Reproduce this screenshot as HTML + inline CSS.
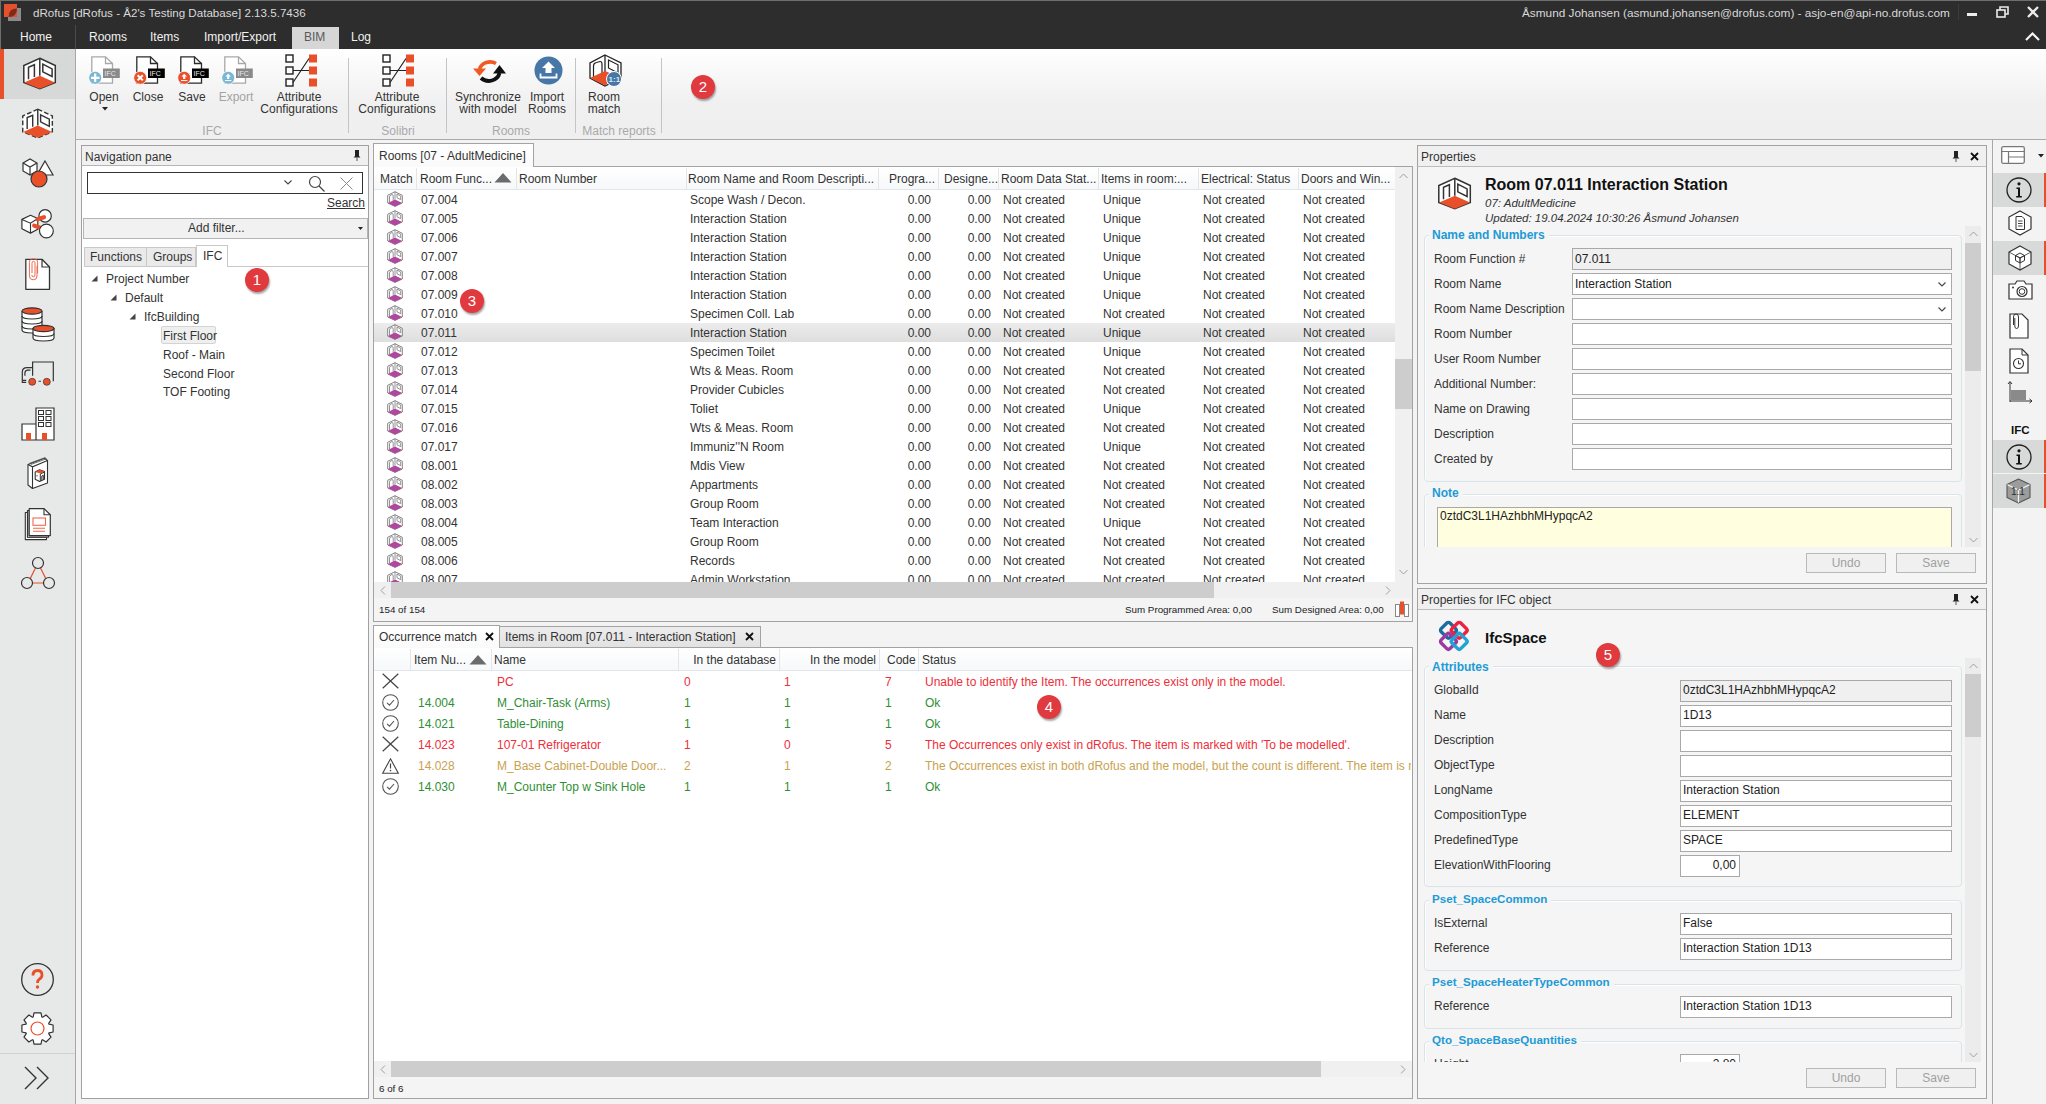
<!DOCTYPE html><html><head><meta charset="utf-8"><title>dRofus</title><style>
*{margin:0;padding:0;box-sizing:border-box}
html,body{width:2046px;height:1104px;overflow:hidden;background:#f3f3f3;font-family:"Liberation Sans",sans-serif;font-size:12px;color:#333}
.a{position:absolute}
.t{position:absolute;white-space:nowrap;line-height:14px}
svg{position:absolute;overflow:visible}
.badge{position:absolute;width:24px;height:24px;border-radius:50%;background:#e0393e;color:#fff;font-size:15px;line-height:24px;text-align:center;box-shadow:1px 2px 2px rgba(0,0,0,.35)}
.inp{position:absolute;background:#fff;border:1px solid #a9a9a9;height:22px}
.lbl{position:absolute;white-space:nowrap;line-height:14px;color:#333}
.grp{position:absolute;border:1px solid #d9e3ea;border-radius:4px;box-shadow:inset 1px 1px 0 #fff}
.gh{position:absolute;white-space:nowrap;line-height:14px;color:#1e9ad6;font-weight:bold;background:#f5f5f5;padding:0 4px 0 3px}
.btn{position:absolute;border:1px solid #b9b9b9;background:#f0f0f0;color:#a0a0a0;text-align:center;line-height:18px;font-size:12px}
</style></head><body>
<div class="a" style="left:0;top:0;width:2046px;height:49px;background:#2d2d2d"></div>
<svg style="left:0;top:0" width="24" height="24"><rect x="8" y="8" width="13" height="13" fill="#8c8a8a"/><rect x="4" y="4" width="13" height="13" fill="#e5502d"/><path d="M8.6 17 Q8.6 8.6 17 8.6 Q17 17 8.6 17 Z" fill="#7f2b19"/></svg>
<div class="a" style="left:0;top:0;width:2046px;height:1px;background:#6e6e6e"></div>
<div class="a" style="left:0;top:0;width:1px;height:49px;background:#6e6e6e"></div>
<div class="t" style="left:33px;top:6px;color:#d9d9d9;font-size:11.6px">dRofus [dRofus - Å2&#x27;s Testing Database] 2.13.5.7436</div>
<div class="t" style="left:1522px;top:6px;color:#d9d9d9;font-size:11.8px">Åsmund Johansen (asmund.johansen@drofus.com) - asjo-en@api-no.drofus.com</div>
<div class="a" style="left:1958px;top:4px;width:1px;height:16px;background:#3c3c3c"></div>
<div class="a" style="left:1967px;top:13px;width:10px;height:3px;background:#ececec"></div>
<svg style="left:1996px;top:6px" width="14" height="12"><rect x="1" y="4" width="8" height="7" fill="none" stroke="#ececec" stroke-width="1.6"/><path d="M4 4V1h8v7h-3" fill="none" stroke="#ececec" stroke-width="1.6"/></svg>
<svg style="left:2027px;top:6px" width="12" height="12"><path d="M1 1L11 11M11 1L1 11" stroke="#ececec" stroke-width="2.3"/></svg>
<svg style="left:2025px;top:32px" width="15" height="9"><path d="M1 8L7.5 1.5L14 8" fill="none" stroke="#f5f5f5" stroke-width="2.2"/></svg>
<div class="a" style="left:75px;top:25px;width:1px;height:24px;background:#4a4a4a"></div>
<div class="a" style="left:292px;top:27px;width:47px;height:22px;background:#d6d6d6"></div>
<div class="t" style="left:20px;top:30px;color:#f2f2f2;font-size:12px">Home</div>
<div class="t" style="left:89px;top:30px;color:#f2f2f2;font-size:12px">Rooms</div>
<div class="t" style="left:150px;top:30px;color:#f2f2f2;font-size:12px">Items</div>
<div class="t" style="left:204px;top:30px;color:#f2f2f2;font-size:12px">Import/Export</div>
<div class="t" style="left:304px;top:30px;color:#5a5a5a;font-size:12px">BIM</div>
<div class="t" style="left:351px;top:30px;color:#f2f2f2;font-size:12px">Log</div>
<div class="a" style="left:76px;top:49px;width:1970px;height:90px;background:linear-gradient(#ffffff 0%,#f0f0f0 60%,#efefef 100%)"></div>
<div class="a" style="left:76px;top:139px;width:1970px;height:1px;background:#aaaaaa"></div>
<svg style="left:91px;top:56px" width="32" height="30" viewBox="0 0 32 30"><path d="M0.8 0.8H14.5L21.5 7.5V27.2H0.8Z" fill="#fff" stroke="#a8a8a8" stroke-width="1.3"/><path d="M14.5 0.8V7.5H21.5" fill="none" stroke="#a8a8a8" stroke-width="1.3"/><rect x="12" y="12.5" width="16.8" height="9.5" fill="#8a8a8a"/><text x="13.6" y="20" font-family="Liberation Sans" font-size="7" fill="#e8e8e8">IFC</text><circle cx="4.2" cy="21.8" r="6.5" fill="#7bb6d2" stroke="#fff" stroke-width="0.8"/><path d="M4.2 17.5V26M0 21.8H8.5" stroke="#fff" stroke-width="2.2"/></svg>
<svg style="left:136px;top:56px" width="32" height="30" viewBox="0 0 32 30"><path d="M0.8 0.8H14.5L21.5 7.5V27.2H0.8Z" fill="#fff" stroke="#2b2b2b" stroke-width="1.3"/><path d="M14.5 0.8V7.5H21.5" fill="none" stroke="#2b2b2b" stroke-width="1.3"/><rect x="12" y="12.5" width="16.8" height="9.5" fill="#000"/><text x="13.6" y="20" font-family="Liberation Sans" font-size="7" fill="#e8e8e8">IFC</text><circle cx="4.2" cy="21.8" r="6.5" fill="#e8502a" stroke="#fff" stroke-width="0.8"/><path d="M1.6 19.2L6.8 24.4M6.8 19.2L1.6 24.4" stroke="#fff" stroke-width="2"/></svg>
<svg style="left:180px;top:56px" width="32" height="30" viewBox="0 0 32 30"><path d="M0.8 0.8H14.5L21.5 7.5V27.2H0.8Z" fill="#fff" stroke="#2b2b2b" stroke-width="1.3"/><path d="M14.5 0.8V7.5H21.5" fill="none" stroke="#2b2b2b" stroke-width="1.3"/><rect x="12" y="12.5" width="16.8" height="9.5" fill="#000"/><text x="13.6" y="20" font-family="Liberation Sans" font-size="7" fill="#e8e8e8">IFC</text><circle cx="4.2" cy="21.8" r="6.5" fill="#e8502a" stroke="#fff" stroke-width="0.8"/><path d="M4.2 17.8L7 20.6H5.3V23H3.1V20.6H1.4Z" fill="#fff"/><path d="M1 24.6H7.4" stroke="#fff" stroke-width="1"/></svg>
<svg style="left:224px;top:56px" width="32" height="30" viewBox="0 0 32 30"><path d="M0.8 0.8H14.5L21.5 7.5V27.2H0.8Z" fill="#fff" stroke="#a8a8a8" stroke-width="1.3"/><path d="M14.5 0.8V7.5H21.5" fill="none" stroke="#a8a8a8" stroke-width="1.3"/><rect x="12" y="12.5" width="16.8" height="9.5" fill="#8a8a8a"/><text x="13.6" y="20" font-family="Liberation Sans" font-size="7" fill="#e8e8e8">IFC</text><circle cx="4.2" cy="21.8" r="6.5" fill="#7bb6d2" stroke="#fff" stroke-width="0.8"/><path d="M4.2 17.8L7 20.6H5.3V23H3.1V20.6H1.4Z" fill="#fff"/><path d="M1 24.6H7.4" stroke="#fff" stroke-width="1"/></svg>
<div class="t" style="left:44px;top:90px;width:120px;text-align:center;color:#333;font-size:12px">Open</div>
<div class="t" style="left:88px;top:90px;width:120px;text-align:center;color:#333;font-size:12px">Close</div>
<div class="t" style="left:132px;top:90px;width:120px;text-align:center;color:#333;font-size:12px">Save</div>
<div class="t" style="left:176px;top:90px;width:120px;text-align:center;color:#a3a3a3;font-size:12px">Export</div>
<svg style="left:102px;top:107px" width="6" height="4"><path d="M0 0H6L3 3.5Z" fill="#222"/></svg>
<svg style="left:285px;top:54px" width="33" height="33" viewBox="0 0 33 33"><rect x="1" y="1" width="7" height="7" fill="#fff" stroke="#222" stroke-width="1.4"/><rect x="24" y="0.5" width="8" height="8" fill="#e8502a"/><rect x="1" y="13" width="7" height="7" fill="#fff" stroke="#222" stroke-width="1.4"/><rect x="24" y="12.5" width="8" height="8" fill="#e8502a"/><rect x="1" y="25" width="7" height="7" fill="#fff" stroke="#222" stroke-width="1.4"/><rect x="24" y="24.5" width="8" height="8" fill="#e8502a"/><path d="M8 16.5H24M8 28.5L24 4.5" stroke="#222" stroke-width="1.2" fill="none"/></svg>
<svg style="left:382px;top:54px" width="33" height="33" viewBox="0 0 33 33"><rect x="1" y="1" width="7" height="7" fill="#fff" stroke="#222" stroke-width="1.4"/><rect x="24" y="0.5" width="8" height="8" fill="#e8502a"/><rect x="1" y="13" width="7" height="7" fill="#fff" stroke="#222" stroke-width="1.4"/><rect x="24" y="12.5" width="8" height="8" fill="#e8502a"/><rect x="1" y="25" width="7" height="7" fill="#fff" stroke="#222" stroke-width="1.4"/><rect x="24" y="24.5" width="8" height="8" fill="#e8502a"/><path d="M8 16.5H24M8 28.5L24 4.5" stroke="#222" stroke-width="1.2" fill="none"/></svg>
<div class="t" style="left:239px;top:90px;width:120px;text-align:center;color:#333;font-size:12px">Attribute</div>
<div class="t" style="left:239px;top:102px;width:120px;text-align:center;color:#333;font-size:12px">Configurations</div>
<div class="t" style="left:337px;top:90px;width:120px;text-align:center;color:#333;font-size:12px">Attribute</div>
<div class="t" style="left:337px;top:102px;width:120px;text-align:center;color:#333;font-size:12px">Configurations</div>
<svg style="left:473px;top:58px" width="34" height="26" viewBox="0 0 34 26"><path d="M23 5.5 A11 10 0 0 0 6.5 11" fill="none" stroke="#f05a22" stroke-width="3.6"/><path d="M0 10.5 L13 10.5 L6.5 18 Z" fill="#f05a22"/><path d="M8 20 A11 10 0 0 0 26.5 15" fill="none" stroke="#111" stroke-width="3.8"/><path d="M20 15.5 L33 15.5 L26.5 7 Z" fill="#111"/></svg>
<svg style="left:534px;top:56px" width="29" height="29" viewBox="0 0 29 29"><circle cx="14.5" cy="14.5" r="14" fill="#4677a6"/><path d="M14.5 5.5L21 12H17.5V17H11.5V12H8Z" fill="#fff"/><path d="M6.5 17.5V21.5H22.5V17.5" fill="none" stroke="#fff" stroke-width="1.8"/></svg>
<div class="t" style="left:428px;top:90px;width:120px;text-align:center;color:#333;font-size:12px">Synchronize</div>
<div class="t" style="left:428px;top:102px;width:120px;text-align:center;color:#333;font-size:12px">with model</div>
<div class="t" style="left:487px;top:90px;width:120px;text-align:center;color:#333;font-size:12px">Import</div>
<div class="t" style="left:487px;top:102px;width:120px;text-align:center;color:#333;font-size:12px">Rooms</div>
<svg style="left:589px;top:54px" width="34" height="33" viewBox="0 0 34 33"><path d="M16 1 L32 9 V24 L16 32 L1 24 V9 Z" fill="#fff" stroke="#222" stroke-width="1.3"/><path d="M16 1 V18" stroke="#222" stroke-width="1.3"/><path d="M4.5 24 V12 Q4.5 9 7.5 8.5 L11 7.5 Q13 7.3 13 10 V21" fill="none" stroke="#222" stroke-width="1.2"/><path d="M19.5 6 L29 10.8 V19 L19.5 14 Z" fill="none" stroke="#222" stroke-width="1.2"/><path d="M1 24 L16 17 L28 22 L16 31.5 Z" fill="#e8502a"/><circle cx="25" cy="25" r="7.5" fill="#4677a6" stroke="#fff" stroke-width="1"/><text x="19.6" y="28" font-family="Liberation Sans" font-size="8" font-weight="bold" fill="#dfe8f0">1:1</text></svg>
<div class="t" style="left:544px;top:90px;width:120px;text-align:center;color:#333;font-size:12px">Room</div>
<div class="t" style="left:544px;top:102px;width:120px;text-align:center;color:#333;font-size:12px">match</div>
<div class="a" style="left:348px;top:58px;width:1px;height:75px;background:#c4c4c4"></div>
<div class="a" style="left:446px;top:58px;width:1px;height:75px;background:#c4c4c4"></div>
<div class="a" style="left:575px;top:58px;width:1px;height:75px;background:#c4c4c4"></div>
<div class="a" style="left:661px;top:58px;width:1px;height:75px;background:#c4c4c4"></div>
<div class="t" style="left:152px;top:124px;width:120px;text-align:center;color:#a9a9a9;font-size:12px">IFC</div>
<div class="t" style="left:338px;top:124px;width:120px;text-align:center;color:#a9a9a9;font-size:12px">Solibri</div>
<div class="t" style="left:451px;top:124px;width:120px;text-align:center;color:#a9a9a9;font-size:12px">Rooms</div>
<div class="t" style="left:559px;top:124px;width:120px;text-align:center;color:#a9a9a9;font-size:12px">Match reports</div>
<div class="badge" style="left:691px;top:75px">2</div>
<div class="a" style="left:0;top:49px;width:75px;height:1055px;background:#e7e8e8"></div>
<div class="a" style="left:75px;top:49px;width:1px;height:1055px;background:#a7a7a7"></div>
<div class="a" style="left:0;top:49px;width:75px;height:50px;background:#d7d9d9"></div>
<div class="a" style="left:0;top:49px;width:4px;height:50px;background:#e8502a"></div>
<div class="a" style="left:0;top:1053px;width:75px;height:1px;background:#d2d2d2"></div>
<svg style="left:23px;top:57px" width="33" height="33" viewBox="0 0 33 32"><path d="M16.8 0.8 L32.3 8 V24.9 L16.8 31.3 L0.8 24.9 V8 Z" fill="#fff" stroke="#333" stroke-width="1.5"/><path d="M16.8 0.8 V18.2" stroke="#333" stroke-width="1.5"/><path d="M5.5 21.8 V9.7 L11.4 7.2 V19.4" fill="none" stroke="#333" stroke-width="1.5"/><path d="M19.8 6.7 L29.1 11.4 V19 L19.8 14.3 Z" fill="none" stroke="#333" stroke-width="1.5"/><path d="M1.2 25 L16.8 18.2 L32 25 L16.8 31.3 Z" fill="#e8502a"/></svg>
<svg style="left:22px;top:108px" width="31" height="31" viewBox="0 0 33 32"><path d="M16.8 0.8 L32.3 8 V24.9 L16.8 31.3 L0.8 24.9 V8 Z" fill="#fff" stroke="#333" stroke-width="1.5" stroke-dasharray="5 2.5"/><path d="M16.8 0.8 V18.2" stroke="#333" stroke-width="1.5"/><path d="M5.5 21.8 V9.7 L11.4 7.2 V19.4" fill="none" stroke="#333" stroke-width="1.5"/><path d="M19.8 6.7 L29.1 11.4 V19 L19.8 14.3 Z" fill="none" stroke="#333" stroke-width="1.5"/><path d="M1.2 25 L16.8 18.2 L32 25 L16.8 31.3 Z" fill="#e8502a"/></svg>
<svg style="left:21px;top:157px" width="34" height="32" viewBox="0 0 34 32"><path d="M2 6 L9 2 L16 6 V14 L9 18 L2 14 Z" fill="#fff" stroke="#333" stroke-width="1.2"/><path d="M2 6 L9 10 L16 6 M9 10 V18" fill="none" stroke="#333" stroke-width="1.2"/><path d="M24 4 L32 18 H16 Z" fill="#fff" stroke="#333" stroke-width="1.2"/><circle cx="18" cy="22" r="8" fill="#e8502a" stroke="#333" stroke-width="1.2"/></svg>
<svg style="left:21px;top:208px" width="34" height="32" viewBox="0 0 34 32"><circle cx="24.1" cy="7.9" r="6.2" fill="#fff" stroke="#333" stroke-width="1.2"/><path d="M0.9 11.4 L9.5 7.3 L16.8 10.5 V21.3 L9.5 25.1 L0.9 20.8 Z" fill="#fff" stroke="#333" stroke-width="1.2" stroke-linejoin="round"/><path d="M0.9 11.4 L9.5 15.2 L16.8 10.5 M9.5 15.2 V25.1" fill="none" stroke="#333" stroke-width="1.1"/><path d="M16.5 11.2 L23 9.2" stroke="#e8502a" stroke-width="4.2" stroke-linecap="round"/><path d="M13.2 17.6 L19.6 20" stroke="#e8502a" stroke-width="4.2" stroke-linecap="round"/><circle cx="25.4" cy="23" r="6.9" fill="#fff" stroke="#333" stroke-width="1.2"/></svg>
<svg style="left:25px;top:258px" width="26" height="33" viewBox="0 0 26 33"><path d="M0.8 1.3 H17 L24.5 9 V31.3 H0.8 Z" fill="#fff" stroke="#333" stroke-width="1.3" stroke-linejoin="round"/><path d="M17 1.3 V9 H24.5" fill="none" stroke="#333" stroke-width="1.2"/><path d="M12.6 15.5 V4.5 Q12.6 0.8 8.5 0.8 Q4.4 0.8 4.4 4.5 V18 Q4.4 21.8 8.2 21.8 Q12 21.8 12 18 V8" fill="none" stroke="#ee6a4f" stroke-width="1"/><path d="M7 15 V5.2 Q7 3.3 8.5 3.3 Q10 3.3 10 5.2 V16.5 Q10 18.8 8.3 18.8 Q6.8 18.8 6.8 17" fill="none" stroke="#ee6a4f" stroke-width="1"/></svg>
<svg style="left:21px;top:306px" width="34" height="34" viewBox="0 0 34 34"><g fill="#fff" stroke="#333" stroke-width="1.2"><path d="M1 5 V24 Q1 27 11 27 Q21 27 21 24 V5"/><path d="M1 10 Q1 13 11 13 Q21 13 21 10 M1 15 Q1 18 11 18 Q21 18 21 15 M1 20 Q1 23 11 23 Q21 23 21 20" fill="none"/><ellipse cx="11" cy="5" rx="10" ry="3.2" fill="#e8502a"/><path d="M12 22 V32 Q12 35 22.5 35 Q33 35 33 32 V22"/><path d="M12 27.5 Q12 30.5 22.5 30.5 Q33 30.5 33 27.5" fill="none"/><ellipse cx="22.5" cy="22.5" rx="10.5" ry="3.2" fill="#e8502a"/></g></svg>
<svg style="left:21px;top:361px" width="34" height="26" viewBox="0 0 34 26"><path d="M11.6 14.7 V1 H32.3 V20.3" fill="none" stroke="#333" stroke-width="1.2"/><path d="M5.2 21.4 H1.3 V11 Q1.3 6.6 6 6.6 H11.6" fill="none" stroke="#333" stroke-width="1.2"/><path d="M3.9 14.7 V12 Q3.9 9.1 7 9.1 H9.5" fill="none" stroke="#333" stroke-width="1.2"/><path d="M1.3 19.4 H5.2 M17.5 20.3 H20" stroke="#333" stroke-width="1.1"/><circle cx="11.2" cy="20.8" r="3.5" fill="#e8502a" stroke="#333" stroke-width="0.7"/><circle cx="25.8" cy="20.8" r="3.5" fill="#e8502a" stroke="#333" stroke-width="0.7"/></svg>
<svg style="left:21px;top:407px" width="34" height="34" viewBox="0 0 34 34"><path d="M1 17 H15 V33 H1 Z M15 1 H33 V33 H15 Z" fill="#fff" stroke="#333" stroke-width="1.2"/><g fill="none" stroke="#333" stroke-width="1"><rect x="17.5" y="3.5" width="5" height="4"/><rect x="25" y="3.5" width="5" height="4"/><rect x="17.5" y="9.5" width="5" height="4"/><rect x="25" y="9.5" width="5" height="4"/><rect x="17.5" y="15.5" width="5" height="4"/><rect x="25" y="15.5" width="5" height="4"/></g><rect x="5" y="26" width="5" height="7" fill="#e8502a"/><rect x="21" y="26" width="5" height="7" fill="#e8502a"/></svg>
<svg style="left:27px;top:457px" width="23" height="34" viewBox="0 0 23 34"><path d="M1 7.5 L17.5 1.2 L20.5 3.5 V26 L5.5 31.5 L1 28 Z" fill="#fff" stroke="#333" stroke-width="1.1" stroke-linejoin="round"/><path d="M5.5 9.8 V31.5 M1 7.5 L5.5 9.8 L20.5 3.5" fill="none" stroke="#333" stroke-width="1.1"/><path d="M2.5 6.3 L18.5 0.5 M3.8 7.5 L19.5 1.8" fill="none" stroke="#555" stroke-width="0.8"/><path d="M8.2 15 L12.5 12.8 L17.5 14.6 V22.3 L12.5 24.5 L8.2 22.3 Z" fill="#fff" stroke="#333" stroke-width="1.1" stroke-linejoin="round"/><path d="M8.2 15 L12.5 12.8 L17.5 14.6 L13.5 16.6 Z" fill="#e8502a"/><path d="M13.3 24 V17 L17.5 15 M10 18.2 V19.4 M14.8 23.2 V19 L16.3 18.3 V22.5" fill="none" stroke="#333" stroke-width="1"/></svg>
<svg style="left:24px;top:508px" width="28" height="33" viewBox="0 0 28 33"><path d="M1.3 4.5 H3.5 V29.3 H22.5 V31.6 H1.3 Z" fill="#fff" stroke="#333" stroke-width="1.1" stroke-linejoin="round"/><path d="M3.5 2.5 H5.2 V27.6 H24.5 V29.3 H3.5 Z" fill="#fff" stroke="#333" stroke-width="1.1" stroke-linejoin="round"/><path d="M5.2 0.6 H20 L26.3 6.8 V27.6 H5.2 Z" fill="#fff" stroke="#333" stroke-width="1.2" stroke-linejoin="round"/><path d="M20 0.6 V6.8 H26.3" fill="none" stroke="#333" stroke-width="1.1"/><rect x="9" y="10" width="12.5" height="7.3" fill="none" stroke="#ee6a4f" stroke-width="1.1"/><path d="M9 20.3 H21 M9 23.3 H21" stroke="#ee6a4f" stroke-width="1.1"/></svg>
<svg style="left:21px;top:557px" width="34" height="32" viewBox="0 0 34 32"><path d="M17 6 L7 26 H27 Z" fill="none" stroke="#e8502a" stroke-width="1.2"/><circle cx="17" cy="6" r="5.5" fill="#e7e8e8" stroke="#333" stroke-width="1.2"/><circle cx="6" cy="26" r="5.5" fill="#e7e8e8" stroke="#333" stroke-width="1.2"/><circle cx="28" cy="26" r="5.5" fill="#e7e8e8" stroke="#333" stroke-width="1.2"/></svg>
<svg style="left:21px;top:963px" width="33" height="33" viewBox="0 0 33 33"><circle cx="16.5" cy="16.5" r="15.8" fill="none" stroke="#333" stroke-width="1.3"/><path d="M12 12.5 Q12 7.5 16.5 7.5 Q21 7.5 21 12 Q21 14.5 18.5 16 Q16.5 17.2 16.5 20" fill="none" stroke="#e8502a" stroke-width="2.8"/><circle cx="16.5" cy="24" r="1.7" fill="#e8502a"/></svg>
<svg style="left:21px;top:1012px" width="33" height="33" viewBox="0 0 33 33"><path d="M32.1 13.0 L32.1 20.0 L28.0 20.8 L27.7 21.6 L30.0 25.1 L25.1 30.0 L21.6 27.7 L20.8 28.0 L20.0 32.1 L13.0 32.1 L12.2 28.0 L11.4 27.7 L7.9 30.0 L3.0 25.1 L5.3 21.6 L5.0 20.8 L0.9 20.0 L0.9 13.0 L5.0 12.2 L5.3 11.4 L3.0 7.9 L7.9 3.0 L11.4 5.3 L12.2 5.0 L13.0 0.9 L20.0 0.9 L20.8 5.0 L21.6 5.3 L25.1 3.0 L30.0 7.9 L27.7 11.4 L28.0 12.2Z" fill="#fff" stroke="#333" stroke-width="1.2" stroke-linejoin="round"/><circle cx="16.5" cy="16.5" r="6.5" fill="none" stroke="#e8502a" stroke-width="1.2"/></svg>
<svg style="left:24px;top:1066px" width="25" height="25" viewBox="0 0 25 25"><path d="M1 1 L12 12 L1 23 M13 1 L24 12 L13 23" fill="none" stroke="#333" stroke-width="1.4"/></svg>
<div class="a" style="left:81px;top:145px;width:288px;height:954px;background:#fff;border:1px solid #a0a0a0"></div>
<div class="a" style="left:82px;top:146px;width:286px;height:20px;background:#f0f0f0;border-bottom:1px solid #b5b5b5"></div>
<div class="t" style="left:85px;top:150px;font-size:12px;color:#333">Navigation pane</div>
<svg style="left:353px;top:150px" width="8" height="11" viewBox="0 0 8 11"><path d="M2 0 H6 V6 L7.5 7.5 H0.5 L2 6 Z" fill="#222"/><path d="M4 7.5 V11" stroke="#555" stroke-width="1"/></svg>
<div class="a" style="left:87px;top:172px;width:276px;height:22px;border:1.5px solid #333;background:#fff"></div>
<svg style="left:284px;top:180px" width="8" height="5"><path d="M0.5 0.5 L4 4 L7.5 0.5" fill="none" stroke="#444" stroke-width="1.1"/></svg>
<svg style="left:308px;top:175px" width="18" height="17"><circle cx="7" cy="7" r="5.5" fill="none" stroke="#444" stroke-width="1.2"/><path d="M11 11 L16.5 16.5" stroke="#444" stroke-width="1.3"/></svg>
<svg style="left:340px;top:177px" width="13" height="13"><path d="M0.5 0.5 L12.5 12.5 M12.5 0.5 L0.5 12.5" stroke="#888" stroke-width="1"/></svg>
<div class="t" style="left:327px;top:196px;text-decoration:underline;color:#333;font-size:12px">Search</div>
<div class="a" style="left:83px;top:218px;width:285px;height:21px;border:1px solid #b5b5b5;background:#f1f1f1"></div>
<div class="t" style="left:188px;top:221px;color:#333;font-size:12px">Add filter...</div>
<svg style="left:358px;top:227px" width="5" height="3"><path d="M0 0H5L2.5 3Z" fill="#222"/></svg>
<div class="a" style="left:84px;top:266px;width:284px;height:1px;background:#c9c9c9"></div>
<div class="a" style="left:84px;top:247px;width:63px;height:20px;border:1px solid #c9c9c9;background:#eaeaea"></div>
<div class="a" style="left:147px;top:247px;width:49px;height:20px;border:1px solid #c9c9c9;border-left:none;background:#eaeaea"></div>
<div class="a" style="left:196px;top:245px;width:32px;height:22px;border:1px solid #c9c9c9;border-bottom:none;background:#fff"></div>
<div class="t" style="left:90px;top:250px;font-size:12px">Functions</div>
<div class="t" style="left:153px;top:250px;font-size:12px">Groups</div>
<div class="t" style="left:203px;top:249px;font-size:12px">IFC</div>
<svg style="left:91px;top:275px" width="7" height="7"><path d="M6.5 0.5 V6.5 H0.5 Z" fill="#444"/></svg>
<svg style="left:110px;top:294px" width="7" height="7"><path d="M6.5 0.5 V6.5 H0.5 Z" fill="#444"/></svg>
<svg style="left:129px;top:313px" width="7" height="7"><path d="M6.5 0.5 V6.5 H0.5 Z" fill="#444"/></svg>
<div class="t" style="left:106px;top:272px;font-size:12px">Project Number</div>
<div class="t" style="left:125px;top:291px;font-size:12px">Default</div>
<div class="t" style="left:144px;top:310px;font-size:12px">IfcBuilding</div>
<div class="a" style="left:161px;top:326px;width:55px;height:18px;border:1px solid #d4d4d4;border-radius:2px;background:#efefef"></div>
<div class="t" style="left:163px;top:329px;font-size:12px">First Floor</div>
<div class="t" style="left:163px;top:348px;font-size:12px">Roof - Main</div>
<div class="t" style="left:163px;top:367px;font-size:12px">Second Floor</div>
<div class="t" style="left:163px;top:385px;font-size:12px">TOF Footing</div>
<div class="badge" style="left:245px;top:268px">1</div>
<div class="a" style="left:373px;top:166px;width:1040px;height:456px;background:#f4f4f4;border:1px solid #a3a3a3"></div>
<div class="a" style="left:373px;top:143px;width:161px;height:24px;background:linear-gradient(#ffffff,#fafafa);border:1px solid #a3a3a3;border-bottom:none"></div>
<div class="t" style="left:379px;top:149px;font-size:12px;color:#333">Rooms [07 - AdultMedicine]</div>
<div class="a" style="left:374px;top:167px;width:1021px;height:415px;background:#fff"></div>
<div class="a" style="left:374px;top:167px;width:1021px;height:23px;background:linear-gradient(#ffffff,#f6f8f9);border-bottom:1px solid #e3e6e8"></div>
<div class="a" style="left:416px;top:168px;width:1px;height:21px;background:#e3e6e8"></div>
<div class="a" style="left:516px;top:168px;width:1px;height:21px;background:#e3e6e8"></div>
<div class="a" style="left:686px;top:168px;width:1px;height:21px;background:#e3e6e8"></div>
<div class="a" style="left:878px;top:168px;width:1px;height:21px;background:#e3e6e8"></div>
<div class="a" style="left:938px;top:168px;width:1px;height:21px;background:#e3e6e8"></div>
<div class="a" style="left:998px;top:168px;width:1px;height:21px;background:#e3e6e8"></div>
<div class="a" style="left:1098px;top:168px;width:1px;height:21px;background:#e3e6e8"></div>
<div class="a" style="left:1198px;top:168px;width:1px;height:21px;background:#e3e6e8"></div>
<div class="a" style="left:1298px;top:168px;width:1px;height:21px;background:#e3e6e8"></div>
<div class="t" style="left:380px;top:172px;font-size:12px;color:#333">Match</div>
<div class="t" style="left:420px;top:172px;font-size:12px;color:#333">Room Func...</div>
<div class="t" style="left:519px;top:172px;font-size:12px;color:#333">Room Number</div>
<div class="t" style="left:688px;top:172px;font-size:12px;color:#333">Room Name and Room Descripti...</div>
<div class="t" style="left:835px;top:172px;width:100px;text-align:right;font-size:12px;color:#333">Progra...</div>
<div class="t" style="left:944px;top:172px;font-size:12px;color:#333">Designe...</div>
<div class="t" style="left:1001px;top:172px;font-size:12px;color:#333">Room Data Stat...</div>
<div class="t" style="left:1101px;top:172px;font-size:12px;color:#333">Items in room:...</div>
<div class="t" style="left:1201px;top:172px;font-size:12px;color:#333">Electrical: Status</div>
<div class="t" style="left:1301px;top:172px;font-size:12px;color:#333">Doors and Win...</div>
<svg style="left:494px;top:172px" width="18" height="11"><path d="M0.5 10.5 L9 1 L17.5 10.5 Z" fill="#6b6b6b"/></svg>
<div class="a" style="left:374px;top:190px;width:1021px;height:392px;overflow:hidden">
<svg style="left:13px;top:1px" width="16" height="16" viewBox="0 0 16 16"><path d="M8 0.7 L15.3 4.3 V12 L8 15.4 L0.7 12 V4.3 Z" fill="#fff" stroke="#777" stroke-width="0.9"/><path d="M8 0.7 V8.5 M2.5 11.2 V5.8 Q2.5 4.3 4 4 L5 3.6 Q6.2 3.5 6.2 4.8 V9.6 M10 3 L13.7 5 V8.7 L10 6.7 Z" fill="none" stroke="#777" stroke-width="0.8"/><path d="M0.8 12 L8 8.6 L15.2 12 L8 15.5 Z" fill="#b0479e"/></svg>
<div class="t" style="left:47px;top:3px;font-size:12px">07.004</div>
<div class="t" style="left:316px;top:3px;font-size:12px">Scope Wash / Decon.</div>
<div class="t" style="left:457px;top:3px;width:100px;text-align:right;font-size:12px">0.00</div>
<div class="t" style="left:517px;top:3px;width:100px;text-align:right;font-size:12px">0.00</div>
<div class="t" style="left:629px;top:3px;font-size:12px">Not created</div>
<div class="t" style="left:729px;top:3px;font-size:12px">Unique</div>
<div class="t" style="left:829px;top:3px;font-size:12px">Not created</div>
<div class="t" style="left:929px;top:3px;font-size:12px">Not created</div>
<svg style="left:13px;top:20px" width="16" height="16" viewBox="0 0 16 16"><path d="M8 0.7 L15.3 4.3 V12 L8 15.4 L0.7 12 V4.3 Z" fill="#fff" stroke="#777" stroke-width="0.9"/><path d="M8 0.7 V8.5 M2.5 11.2 V5.8 Q2.5 4.3 4 4 L5 3.6 Q6.2 3.5 6.2 4.8 V9.6 M10 3 L13.7 5 V8.7 L10 6.7 Z" fill="none" stroke="#777" stroke-width="0.8"/><path d="M0.8 12 L8 8.6 L15.2 12 L8 15.5 Z" fill="#b0479e"/></svg>
<div class="t" style="left:47px;top:22px;font-size:12px">07.005</div>
<div class="t" style="left:316px;top:22px;font-size:12px">Interaction Station</div>
<div class="t" style="left:457px;top:22px;width:100px;text-align:right;font-size:12px">0.00</div>
<div class="t" style="left:517px;top:22px;width:100px;text-align:right;font-size:12px">0.00</div>
<div class="t" style="left:629px;top:22px;font-size:12px">Not created</div>
<div class="t" style="left:729px;top:22px;font-size:12px">Unique</div>
<div class="t" style="left:829px;top:22px;font-size:12px">Not created</div>
<div class="t" style="left:929px;top:22px;font-size:12px">Not created</div>
<svg style="left:13px;top:39px" width="16" height="16" viewBox="0 0 16 16"><path d="M8 0.7 L15.3 4.3 V12 L8 15.4 L0.7 12 V4.3 Z" fill="#fff" stroke="#777" stroke-width="0.9"/><path d="M8 0.7 V8.5 M2.5 11.2 V5.8 Q2.5 4.3 4 4 L5 3.6 Q6.2 3.5 6.2 4.8 V9.6 M10 3 L13.7 5 V8.7 L10 6.7 Z" fill="none" stroke="#777" stroke-width="0.8"/><path d="M0.8 12 L8 8.6 L15.2 12 L8 15.5 Z" fill="#b0479e"/></svg>
<div class="t" style="left:47px;top:41px;font-size:12px">07.006</div>
<div class="t" style="left:316px;top:41px;font-size:12px">Interaction Station</div>
<div class="t" style="left:457px;top:41px;width:100px;text-align:right;font-size:12px">0.00</div>
<div class="t" style="left:517px;top:41px;width:100px;text-align:right;font-size:12px">0.00</div>
<div class="t" style="left:629px;top:41px;font-size:12px">Not created</div>
<div class="t" style="left:729px;top:41px;font-size:12px">Unique</div>
<div class="t" style="left:829px;top:41px;font-size:12px">Not created</div>
<div class="t" style="left:929px;top:41px;font-size:12px">Not created</div>
<svg style="left:13px;top:58px" width="16" height="16" viewBox="0 0 16 16"><path d="M8 0.7 L15.3 4.3 V12 L8 15.4 L0.7 12 V4.3 Z" fill="#fff" stroke="#777" stroke-width="0.9"/><path d="M8 0.7 V8.5 M2.5 11.2 V5.8 Q2.5 4.3 4 4 L5 3.6 Q6.2 3.5 6.2 4.8 V9.6 M10 3 L13.7 5 V8.7 L10 6.7 Z" fill="none" stroke="#777" stroke-width="0.8"/><path d="M0.8 12 L8 8.6 L15.2 12 L8 15.5 Z" fill="#b0479e"/></svg>
<div class="t" style="left:47px;top:60px;font-size:12px">07.007</div>
<div class="t" style="left:316px;top:60px;font-size:12px">Interaction Station</div>
<div class="t" style="left:457px;top:60px;width:100px;text-align:right;font-size:12px">0.00</div>
<div class="t" style="left:517px;top:60px;width:100px;text-align:right;font-size:12px">0.00</div>
<div class="t" style="left:629px;top:60px;font-size:12px">Not created</div>
<div class="t" style="left:729px;top:60px;font-size:12px">Unique</div>
<div class="t" style="left:829px;top:60px;font-size:12px">Not created</div>
<div class="t" style="left:929px;top:60px;font-size:12px">Not created</div>
<svg style="left:13px;top:77px" width="16" height="16" viewBox="0 0 16 16"><path d="M8 0.7 L15.3 4.3 V12 L8 15.4 L0.7 12 V4.3 Z" fill="#fff" stroke="#777" stroke-width="0.9"/><path d="M8 0.7 V8.5 M2.5 11.2 V5.8 Q2.5 4.3 4 4 L5 3.6 Q6.2 3.5 6.2 4.8 V9.6 M10 3 L13.7 5 V8.7 L10 6.7 Z" fill="none" stroke="#777" stroke-width="0.8"/><path d="M0.8 12 L8 8.6 L15.2 12 L8 15.5 Z" fill="#b0479e"/></svg>
<div class="t" style="left:47px;top:79px;font-size:12px">07.008</div>
<div class="t" style="left:316px;top:79px;font-size:12px">Interaction Station</div>
<div class="t" style="left:457px;top:79px;width:100px;text-align:right;font-size:12px">0.00</div>
<div class="t" style="left:517px;top:79px;width:100px;text-align:right;font-size:12px">0.00</div>
<div class="t" style="left:629px;top:79px;font-size:12px">Not created</div>
<div class="t" style="left:729px;top:79px;font-size:12px">Unique</div>
<div class="t" style="left:829px;top:79px;font-size:12px">Not created</div>
<div class="t" style="left:929px;top:79px;font-size:12px">Not created</div>
<svg style="left:13px;top:96px" width="16" height="16" viewBox="0 0 16 16"><path d="M8 0.7 L15.3 4.3 V12 L8 15.4 L0.7 12 V4.3 Z" fill="#fff" stroke="#777" stroke-width="0.9"/><path d="M8 0.7 V8.5 M2.5 11.2 V5.8 Q2.5 4.3 4 4 L5 3.6 Q6.2 3.5 6.2 4.8 V9.6 M10 3 L13.7 5 V8.7 L10 6.7 Z" fill="none" stroke="#777" stroke-width="0.8"/><path d="M0.8 12 L8 8.6 L15.2 12 L8 15.5 Z" fill="#b0479e"/></svg>
<div class="t" style="left:47px;top:98px;font-size:12px">07.009</div>
<div class="t" style="left:316px;top:98px;font-size:12px">Interaction Station</div>
<div class="t" style="left:457px;top:98px;width:100px;text-align:right;font-size:12px">0.00</div>
<div class="t" style="left:517px;top:98px;width:100px;text-align:right;font-size:12px">0.00</div>
<div class="t" style="left:629px;top:98px;font-size:12px">Not created</div>
<div class="t" style="left:729px;top:98px;font-size:12px">Unique</div>
<div class="t" style="left:829px;top:98px;font-size:12px">Not created</div>
<div class="t" style="left:929px;top:98px;font-size:12px">Not created</div>
<svg style="left:13px;top:115px" width="16" height="16" viewBox="0 0 16 16"><path d="M8 0.7 L15.3 4.3 V12 L8 15.4 L0.7 12 V4.3 Z" fill="#fff" stroke="#777" stroke-width="0.9"/><path d="M8 0.7 V8.5 M2.5 11.2 V5.8 Q2.5 4.3 4 4 L5 3.6 Q6.2 3.5 6.2 4.8 V9.6 M10 3 L13.7 5 V8.7 L10 6.7 Z" fill="none" stroke="#777" stroke-width="0.8"/><path d="M0.8 12 L8 8.6 L15.2 12 L8 15.5 Z" fill="#b0479e"/></svg>
<div class="t" style="left:47px;top:117px;font-size:12px">07.010</div>
<div class="t" style="left:316px;top:117px;font-size:12px">Specimen Coll. Lab</div>
<div class="t" style="left:457px;top:117px;width:100px;text-align:right;font-size:12px">0.00</div>
<div class="t" style="left:517px;top:117px;width:100px;text-align:right;font-size:12px">0.00</div>
<div class="t" style="left:629px;top:117px;font-size:12px">Not created</div>
<div class="t" style="left:729px;top:117px;font-size:12px">Not created</div>
<div class="t" style="left:829px;top:117px;font-size:12px">Not created</div>
<div class="t" style="left:929px;top:117px;font-size:12px">Not created</div>
<div class="a" style="left:0;top:133px;width:1021px;height:19px;background:linear-gradient(#ececec,#dedede)"></div>
<svg style="left:13px;top:134px" width="16" height="16" viewBox="0 0 16 16"><path d="M8 0.7 L15.3 4.3 V12 L8 15.4 L0.7 12 V4.3 Z" fill="#fff" stroke="#777" stroke-width="0.9"/><path d="M8 0.7 V8.5 M2.5 11.2 V5.8 Q2.5 4.3 4 4 L5 3.6 Q6.2 3.5 6.2 4.8 V9.6 M10 3 L13.7 5 V8.7 L10 6.7 Z" fill="none" stroke="#777" stroke-width="0.8"/><path d="M0.8 12 L8 8.6 L15.2 12 L8 15.5 Z" fill="#b0479e"/></svg>
<div class="t" style="left:47px;top:136px;font-size:12px">07.011</div>
<div class="t" style="left:316px;top:136px;font-size:12px">Interaction Station</div>
<div class="t" style="left:457px;top:136px;width:100px;text-align:right;font-size:12px">0.00</div>
<div class="t" style="left:517px;top:136px;width:100px;text-align:right;font-size:12px">0.00</div>
<div class="t" style="left:629px;top:136px;font-size:12px">Not created</div>
<div class="t" style="left:729px;top:136px;font-size:12px">Unique</div>
<div class="t" style="left:829px;top:136px;font-size:12px">Not created</div>
<div class="t" style="left:929px;top:136px;font-size:12px">Not created</div>
<svg style="left:13px;top:153px" width="16" height="16" viewBox="0 0 16 16"><path d="M8 0.7 L15.3 4.3 V12 L8 15.4 L0.7 12 V4.3 Z" fill="#fff" stroke="#777" stroke-width="0.9"/><path d="M8 0.7 V8.5 M2.5 11.2 V5.8 Q2.5 4.3 4 4 L5 3.6 Q6.2 3.5 6.2 4.8 V9.6 M10 3 L13.7 5 V8.7 L10 6.7 Z" fill="none" stroke="#777" stroke-width="0.8"/><path d="M0.8 12 L8 8.6 L15.2 12 L8 15.5 Z" fill="#b0479e"/></svg>
<div class="t" style="left:47px;top:155px;font-size:12px">07.012</div>
<div class="t" style="left:316px;top:155px;font-size:12px">Specimen Toilet</div>
<div class="t" style="left:457px;top:155px;width:100px;text-align:right;font-size:12px">0.00</div>
<div class="t" style="left:517px;top:155px;width:100px;text-align:right;font-size:12px">0.00</div>
<div class="t" style="left:629px;top:155px;font-size:12px">Not created</div>
<div class="t" style="left:729px;top:155px;font-size:12px">Unique</div>
<div class="t" style="left:829px;top:155px;font-size:12px">Not created</div>
<div class="t" style="left:929px;top:155px;font-size:12px">Not created</div>
<svg style="left:13px;top:172px" width="16" height="16" viewBox="0 0 16 16"><path d="M8 0.7 L15.3 4.3 V12 L8 15.4 L0.7 12 V4.3 Z" fill="#fff" stroke="#777" stroke-width="0.9"/><path d="M8 0.7 V8.5 M2.5 11.2 V5.8 Q2.5 4.3 4 4 L5 3.6 Q6.2 3.5 6.2 4.8 V9.6 M10 3 L13.7 5 V8.7 L10 6.7 Z" fill="none" stroke="#777" stroke-width="0.8"/><path d="M0.8 12 L8 8.6 L15.2 12 L8 15.5 Z" fill="#b0479e"/></svg>
<div class="t" style="left:47px;top:174px;font-size:12px">07.013</div>
<div class="t" style="left:316px;top:174px;font-size:12px">Wts &amp; Meas. Room</div>
<div class="t" style="left:457px;top:174px;width:100px;text-align:right;font-size:12px">0.00</div>
<div class="t" style="left:517px;top:174px;width:100px;text-align:right;font-size:12px">0.00</div>
<div class="t" style="left:629px;top:174px;font-size:12px">Not created</div>
<div class="t" style="left:729px;top:174px;font-size:12px">Not created</div>
<div class="t" style="left:829px;top:174px;font-size:12px">Not created</div>
<div class="t" style="left:929px;top:174px;font-size:12px">Not created</div>
<svg style="left:13px;top:191px" width="16" height="16" viewBox="0 0 16 16"><path d="M8 0.7 L15.3 4.3 V12 L8 15.4 L0.7 12 V4.3 Z" fill="#fff" stroke="#777" stroke-width="0.9"/><path d="M8 0.7 V8.5 M2.5 11.2 V5.8 Q2.5 4.3 4 4 L5 3.6 Q6.2 3.5 6.2 4.8 V9.6 M10 3 L13.7 5 V8.7 L10 6.7 Z" fill="none" stroke="#777" stroke-width="0.8"/><path d="M0.8 12 L8 8.6 L15.2 12 L8 15.5 Z" fill="#b0479e"/></svg>
<div class="t" style="left:47px;top:193px;font-size:12px">07.014</div>
<div class="t" style="left:316px;top:193px;font-size:12px">Provider Cubicles</div>
<div class="t" style="left:457px;top:193px;width:100px;text-align:right;font-size:12px">0.00</div>
<div class="t" style="left:517px;top:193px;width:100px;text-align:right;font-size:12px">0.00</div>
<div class="t" style="left:629px;top:193px;font-size:12px">Not created</div>
<div class="t" style="left:729px;top:193px;font-size:12px">Not created</div>
<div class="t" style="left:829px;top:193px;font-size:12px">Not created</div>
<div class="t" style="left:929px;top:193px;font-size:12px">Not created</div>
<svg style="left:13px;top:210px" width="16" height="16" viewBox="0 0 16 16"><path d="M8 0.7 L15.3 4.3 V12 L8 15.4 L0.7 12 V4.3 Z" fill="#fff" stroke="#777" stroke-width="0.9"/><path d="M8 0.7 V8.5 M2.5 11.2 V5.8 Q2.5 4.3 4 4 L5 3.6 Q6.2 3.5 6.2 4.8 V9.6 M10 3 L13.7 5 V8.7 L10 6.7 Z" fill="none" stroke="#777" stroke-width="0.8"/><path d="M0.8 12 L8 8.6 L15.2 12 L8 15.5 Z" fill="#b0479e"/></svg>
<div class="t" style="left:47px;top:212px;font-size:12px">07.015</div>
<div class="t" style="left:316px;top:212px;font-size:12px">Toliet</div>
<div class="t" style="left:457px;top:212px;width:100px;text-align:right;font-size:12px">0.00</div>
<div class="t" style="left:517px;top:212px;width:100px;text-align:right;font-size:12px">0.00</div>
<div class="t" style="left:629px;top:212px;font-size:12px">Not created</div>
<div class="t" style="left:729px;top:212px;font-size:12px">Unique</div>
<div class="t" style="left:829px;top:212px;font-size:12px">Not created</div>
<div class="t" style="left:929px;top:212px;font-size:12px">Not created</div>
<svg style="left:13px;top:229px" width="16" height="16" viewBox="0 0 16 16"><path d="M8 0.7 L15.3 4.3 V12 L8 15.4 L0.7 12 V4.3 Z" fill="#fff" stroke="#777" stroke-width="0.9"/><path d="M8 0.7 V8.5 M2.5 11.2 V5.8 Q2.5 4.3 4 4 L5 3.6 Q6.2 3.5 6.2 4.8 V9.6 M10 3 L13.7 5 V8.7 L10 6.7 Z" fill="none" stroke="#777" stroke-width="0.8"/><path d="M0.8 12 L8 8.6 L15.2 12 L8 15.5 Z" fill="#b0479e"/></svg>
<div class="t" style="left:47px;top:231px;font-size:12px">07.016</div>
<div class="t" style="left:316px;top:231px;font-size:12px">Wts &amp; Meas. Room</div>
<div class="t" style="left:457px;top:231px;width:100px;text-align:right;font-size:12px">0.00</div>
<div class="t" style="left:517px;top:231px;width:100px;text-align:right;font-size:12px">0.00</div>
<div class="t" style="left:629px;top:231px;font-size:12px">Not created</div>
<div class="t" style="left:729px;top:231px;font-size:12px">Not created</div>
<div class="t" style="left:829px;top:231px;font-size:12px">Not created</div>
<div class="t" style="left:929px;top:231px;font-size:12px">Not created</div>
<svg style="left:13px;top:248px" width="16" height="16" viewBox="0 0 16 16"><path d="M8 0.7 L15.3 4.3 V12 L8 15.4 L0.7 12 V4.3 Z" fill="#fff" stroke="#777" stroke-width="0.9"/><path d="M8 0.7 V8.5 M2.5 11.2 V5.8 Q2.5 4.3 4 4 L5 3.6 Q6.2 3.5 6.2 4.8 V9.6 M10 3 L13.7 5 V8.7 L10 6.7 Z" fill="none" stroke="#777" stroke-width="0.8"/><path d="M0.8 12 L8 8.6 L15.2 12 L8 15.5 Z" fill="#b0479e"/></svg>
<div class="t" style="left:47px;top:250px;font-size:12px">07.017</div>
<div class="t" style="left:316px;top:250px;font-size:12px">Immuniz&#x27;&#x27;N Room</div>
<div class="t" style="left:457px;top:250px;width:100px;text-align:right;font-size:12px">0.00</div>
<div class="t" style="left:517px;top:250px;width:100px;text-align:right;font-size:12px">0.00</div>
<div class="t" style="left:629px;top:250px;font-size:12px">Not created</div>
<div class="t" style="left:729px;top:250px;font-size:12px">Unique</div>
<div class="t" style="left:829px;top:250px;font-size:12px">Not created</div>
<div class="t" style="left:929px;top:250px;font-size:12px">Not created</div>
<svg style="left:13px;top:267px" width="16" height="16" viewBox="0 0 16 16"><path d="M8 0.7 L15.3 4.3 V12 L8 15.4 L0.7 12 V4.3 Z" fill="#fff" stroke="#777" stroke-width="0.9"/><path d="M8 0.7 V8.5 M2.5 11.2 V5.8 Q2.5 4.3 4 4 L5 3.6 Q6.2 3.5 6.2 4.8 V9.6 M10 3 L13.7 5 V8.7 L10 6.7 Z" fill="none" stroke="#777" stroke-width="0.8"/><path d="M0.8 12 L8 8.6 L15.2 12 L8 15.5 Z" fill="#b0479e"/></svg>
<div class="t" style="left:47px;top:269px;font-size:12px">08.001</div>
<div class="t" style="left:316px;top:269px;font-size:12px">Mdis View</div>
<div class="t" style="left:457px;top:269px;width:100px;text-align:right;font-size:12px">0.00</div>
<div class="t" style="left:517px;top:269px;width:100px;text-align:right;font-size:12px">0.00</div>
<div class="t" style="left:629px;top:269px;font-size:12px">Not created</div>
<div class="t" style="left:729px;top:269px;font-size:12px">Not created</div>
<div class="t" style="left:829px;top:269px;font-size:12px">Not created</div>
<div class="t" style="left:929px;top:269px;font-size:12px">Not created</div>
<svg style="left:13px;top:286px" width="16" height="16" viewBox="0 0 16 16"><path d="M8 0.7 L15.3 4.3 V12 L8 15.4 L0.7 12 V4.3 Z" fill="#fff" stroke="#777" stroke-width="0.9"/><path d="M8 0.7 V8.5 M2.5 11.2 V5.8 Q2.5 4.3 4 4 L5 3.6 Q6.2 3.5 6.2 4.8 V9.6 M10 3 L13.7 5 V8.7 L10 6.7 Z" fill="none" stroke="#777" stroke-width="0.8"/><path d="M0.8 12 L8 8.6 L15.2 12 L8 15.5 Z" fill="#b0479e"/></svg>
<div class="t" style="left:47px;top:288px;font-size:12px">08.002</div>
<div class="t" style="left:316px;top:288px;font-size:12px">Appartments</div>
<div class="t" style="left:457px;top:288px;width:100px;text-align:right;font-size:12px">0.00</div>
<div class="t" style="left:517px;top:288px;width:100px;text-align:right;font-size:12px">0.00</div>
<div class="t" style="left:629px;top:288px;font-size:12px">Not created</div>
<div class="t" style="left:729px;top:288px;font-size:12px">Not created</div>
<div class="t" style="left:829px;top:288px;font-size:12px">Not created</div>
<div class="t" style="left:929px;top:288px;font-size:12px">Not created</div>
<svg style="left:13px;top:305px" width="16" height="16" viewBox="0 0 16 16"><path d="M8 0.7 L15.3 4.3 V12 L8 15.4 L0.7 12 V4.3 Z" fill="#fff" stroke="#777" stroke-width="0.9"/><path d="M8 0.7 V8.5 M2.5 11.2 V5.8 Q2.5 4.3 4 4 L5 3.6 Q6.2 3.5 6.2 4.8 V9.6 M10 3 L13.7 5 V8.7 L10 6.7 Z" fill="none" stroke="#777" stroke-width="0.8"/><path d="M0.8 12 L8 8.6 L15.2 12 L8 15.5 Z" fill="#b0479e"/></svg>
<div class="t" style="left:47px;top:307px;font-size:12px">08.003</div>
<div class="t" style="left:316px;top:307px;font-size:12px">Group Room</div>
<div class="t" style="left:457px;top:307px;width:100px;text-align:right;font-size:12px">0.00</div>
<div class="t" style="left:517px;top:307px;width:100px;text-align:right;font-size:12px">0.00</div>
<div class="t" style="left:629px;top:307px;font-size:12px">Not created</div>
<div class="t" style="left:729px;top:307px;font-size:12px">Not created</div>
<div class="t" style="left:829px;top:307px;font-size:12px">Not created</div>
<div class="t" style="left:929px;top:307px;font-size:12px">Not created</div>
<svg style="left:13px;top:324px" width="16" height="16" viewBox="0 0 16 16"><path d="M8 0.7 L15.3 4.3 V12 L8 15.4 L0.7 12 V4.3 Z" fill="#fff" stroke="#777" stroke-width="0.9"/><path d="M8 0.7 V8.5 M2.5 11.2 V5.8 Q2.5 4.3 4 4 L5 3.6 Q6.2 3.5 6.2 4.8 V9.6 M10 3 L13.7 5 V8.7 L10 6.7 Z" fill="none" stroke="#777" stroke-width="0.8"/><path d="M0.8 12 L8 8.6 L15.2 12 L8 15.5 Z" fill="#b0479e"/></svg>
<div class="t" style="left:47px;top:326px;font-size:12px">08.004</div>
<div class="t" style="left:316px;top:326px;font-size:12px">Team Interaction</div>
<div class="t" style="left:457px;top:326px;width:100px;text-align:right;font-size:12px">0.00</div>
<div class="t" style="left:517px;top:326px;width:100px;text-align:right;font-size:12px">0.00</div>
<div class="t" style="left:629px;top:326px;font-size:12px">Not created</div>
<div class="t" style="left:729px;top:326px;font-size:12px">Unique</div>
<div class="t" style="left:829px;top:326px;font-size:12px">Not created</div>
<div class="t" style="left:929px;top:326px;font-size:12px">Not created</div>
<svg style="left:13px;top:343px" width="16" height="16" viewBox="0 0 16 16"><path d="M8 0.7 L15.3 4.3 V12 L8 15.4 L0.7 12 V4.3 Z" fill="#fff" stroke="#777" stroke-width="0.9"/><path d="M8 0.7 V8.5 M2.5 11.2 V5.8 Q2.5 4.3 4 4 L5 3.6 Q6.2 3.5 6.2 4.8 V9.6 M10 3 L13.7 5 V8.7 L10 6.7 Z" fill="none" stroke="#777" stroke-width="0.8"/><path d="M0.8 12 L8 8.6 L15.2 12 L8 15.5 Z" fill="#b0479e"/></svg>
<div class="t" style="left:47px;top:345px;font-size:12px">08.005</div>
<div class="t" style="left:316px;top:345px;font-size:12px">Group Room</div>
<div class="t" style="left:457px;top:345px;width:100px;text-align:right;font-size:12px">0.00</div>
<div class="t" style="left:517px;top:345px;width:100px;text-align:right;font-size:12px">0.00</div>
<div class="t" style="left:629px;top:345px;font-size:12px">Not created</div>
<div class="t" style="left:729px;top:345px;font-size:12px">Not created</div>
<div class="t" style="left:829px;top:345px;font-size:12px">Not created</div>
<div class="t" style="left:929px;top:345px;font-size:12px">Not created</div>
<svg style="left:13px;top:362px" width="16" height="16" viewBox="0 0 16 16"><path d="M8 0.7 L15.3 4.3 V12 L8 15.4 L0.7 12 V4.3 Z" fill="#fff" stroke="#777" stroke-width="0.9"/><path d="M8 0.7 V8.5 M2.5 11.2 V5.8 Q2.5 4.3 4 4 L5 3.6 Q6.2 3.5 6.2 4.8 V9.6 M10 3 L13.7 5 V8.7 L10 6.7 Z" fill="none" stroke="#777" stroke-width="0.8"/><path d="M0.8 12 L8 8.6 L15.2 12 L8 15.5 Z" fill="#b0479e"/></svg>
<div class="t" style="left:47px;top:364px;font-size:12px">08.006</div>
<div class="t" style="left:316px;top:364px;font-size:12px">Records</div>
<div class="t" style="left:457px;top:364px;width:100px;text-align:right;font-size:12px">0.00</div>
<div class="t" style="left:517px;top:364px;width:100px;text-align:right;font-size:12px">0.00</div>
<div class="t" style="left:629px;top:364px;font-size:12px">Not created</div>
<div class="t" style="left:729px;top:364px;font-size:12px">Not created</div>
<div class="t" style="left:829px;top:364px;font-size:12px">Not created</div>
<div class="t" style="left:929px;top:364px;font-size:12px">Not created</div>
<svg style="left:13px;top:381px" width="16" height="16" viewBox="0 0 16 16"><path d="M8 0.7 L15.3 4.3 V12 L8 15.4 L0.7 12 V4.3 Z" fill="#fff" stroke="#777" stroke-width="0.9"/><path d="M8 0.7 V8.5 M2.5 11.2 V5.8 Q2.5 4.3 4 4 L5 3.6 Q6.2 3.5 6.2 4.8 V9.6 M10 3 L13.7 5 V8.7 L10 6.7 Z" fill="none" stroke="#777" stroke-width="0.8"/><path d="M0.8 12 L8 8.6 L15.2 12 L8 15.5 Z" fill="#b0479e"/></svg>
<div class="t" style="left:47px;top:383px;font-size:12px">08.007</div>
<div class="t" style="left:316px;top:383px;font-size:12px">Admin Workstation</div>
<div class="t" style="left:457px;top:383px;width:100px;text-align:right;font-size:12px">0.00</div>
<div class="t" style="left:517px;top:383px;width:100px;text-align:right;font-size:12px">0.00</div>
<div class="t" style="left:629px;top:383px;font-size:12px">Not created</div>
<div class="t" style="left:729px;top:383px;font-size:12px">Not created</div>
<div class="t" style="left:829px;top:383px;font-size:12px">Not created</div>
<div class="t" style="left:929px;top:383px;font-size:12px">Not created</div>
</div>
<div class="a" style="left:1395px;top:167px;width:17px;height:415px;background:#f0f0f0"></div>
<div class="a" style="left:1395px;top:359px;width:17px;height:50px;background:#cdcdcd"></div>
<svg style="left:1399px;top:173px" width="9" height="6"><path d="M0.5 5 L4.5 1 L8.5 5" fill="none" stroke="#a0a0a0" stroke-width="1"/></svg>
<svg style="left:1399px;top:569px" width="9" height="6"><path d="M0.5 1 L4.5 5 L8.5 1" fill="none" stroke="#a0a0a0" stroke-width="1"/></svg>
<div class="a" style="left:374px;top:582px;width:1038px;height:16px;background:#f0f0f0"></div>
<div class="a" style="left:391px;top:582px;width:823px;height:16px;background:#cdcdcd"></div>
<svg style="left:380px;top:586px" width="6" height="9"><path d="M5 0.5 L1 4.5 L5 8.5" fill="none" stroke="#a0a0a0" stroke-width="1"/></svg>
<svg style="left:1385px;top:586px" width="6" height="9"><path d="M1 0.5 L5 4.5 L1 8.5" fill="none" stroke="#a0a0a0" stroke-width="1"/></svg>
<div class="t" style="left:379px;top:603px;font-size:9.8px;color:#222">154 of 154</div>
<div class="t" style="left:1125px;top:603px;font-size:9.8px;color:#222">Sum Programmed Area: 0,00</div>
<div class="t" style="left:1272px;top:603px;font-size:9.8px;color:#222">Sum Designed Area: 0,00</div>
<svg style="left:1395px;top:601px" width="14" height="17"><rect x="0.5" y="3.5" width="4" height="12" fill="#fff" stroke="#888" stroke-width="1"/><rect x="9.5" y="3.5" width="4" height="12" fill="#fff" stroke="#888" stroke-width="1"/><rect x="5" y="0.5" width="4" height="13" fill="#e8502a"/></svg>
<div class="badge" style="left:460px;top:289px">3</div>
<div class="a" style="left:373px;top:647px;width:1040px;height:452px;background:#f4f4f4;border:1px solid #a3a3a3"></div>
<div class="a" style="left:373px;top:625px;width:127px;height:23px;background:linear-gradient(#ffffff,#fafafa);border:1px solid #a3a3a3;border-bottom:none"></div>
<div class="a" style="left:500px;top:626px;width:261px;height:22px;background:linear-gradient(#ececec,#e2e2e2);border:1px solid #a3a3a3;border-left:none"></div>
<div class="t" style="left:379px;top:630px;font-size:12px;color:#333">Occurrence match</div>
<div class="t" style="left:505px;top:630px;font-size:12px;color:#333">Items in Room [07.011 - Interaction Station]</div>
<svg style="left:485px;top:632px" width="9" height="9"><path d="M1 1 L8 8 M8 1 L1 8" stroke="#111" stroke-width="1.8"/></svg>
<svg style="left:745px;top:632px" width="9" height="9"><path d="M1 1 L8 8 M8 1 L1 8" stroke="#111" stroke-width="1.8"/></svg>
<div class="a" style="left:374px;top:648px;width:1038px;height:413px;background:#fff"></div>
<div class="a" style="left:374px;top:648px;width:1038px;height:23px;background:linear-gradient(#ffffff,#f6f8f9);border-bottom:1px solid #e3e6e8"></div>
<div class="a" style="left:410px;top:649px;width:1px;height:21px;background:#e3e6e8"></div>
<div class="a" style="left:491px;top:649px;width:1px;height:21px;background:#e3e6e8"></div>
<div class="a" style="left:678px;top:649px;width:1px;height:21px;background:#e3e6e8"></div>
<div class="a" style="left:779px;top:649px;width:1px;height:21px;background:#e3e6e8"></div>
<div class="a" style="left:879px;top:649px;width:1px;height:21px;background:#e3e6e8"></div>
<div class="a" style="left:918px;top:649px;width:1px;height:21px;background:#e3e6e8"></div>
<div class="t" style="left:414px;top:653px;font-size:12px">Item Nu...</div>
<div class="t" style="left:494px;top:653px;font-size:12px">Name</div>
<div class="t" style="left:626px;top:653px;width:150px;text-align:right;font-size:12px">In the database</div>
<div class="t" style="left:726px;top:653px;width:150px;text-align:right;font-size:12px">In the model</div>
<div class="t" style="left:887px;top:653px;font-size:12px">Code</div>
<div class="t" style="left:922px;top:653px;font-size:12px">Status</div>
<svg style="left:469px;top:654px" width="18" height="11"><path d="M0.5 10.5 L9 1 L17.5 10.5 Z" fill="#6b6b6b"/></svg>
<div class="a" style="left:374px;top:671px;width:1037px;height:390px;overflow:hidden">
<svg style="left:8px;top:2px" width="17" height="16"><path d="M0.7 0.7 L16.3 15.3 M16.3 0.7 L0.7 15.3" stroke="#444" stroke-width="1.2"/></svg>
<div class="t" style="left:44px;top:4px;font-size:12px;color:#ee2e3a"></div>
<div class="t" style="left:123px;top:4px;font-size:12px;color:#ee2e3a">PC</div>
<div class="t" style="left:310px;top:4px;font-size:12px;color:#ee2e3a">0</div>
<div class="t" style="left:410px;top:4px;font-size:12px;color:#ee2e3a">1</div>
<div class="t" style="left:511px;top:4px;font-size:12px;color:#ee2e3a">7</div>
<div class="t" style="left:551px;top:4px;font-size:12px;color:#ee2e3a">Unable to identify the Item. The occurrences exist only in the model.</div>
<svg style="left:8px;top:23px" width="17" height="17"><circle cx="8.5" cy="8.5" r="7.8" fill="none" stroke="#555" stroke-width="1.1"/><path d="M5 8.8 L7.5 11.2 L12 6" fill="none" stroke="#555" stroke-width="1.1"/></svg>
<div class="t" style="left:44px;top:25px;font-size:12px;color:#2f8f35">14.004</div>
<div class="t" style="left:123px;top:25px;font-size:12px;color:#2f8f35">M_Chair-Task (Arms)</div>
<div class="t" style="left:310px;top:25px;font-size:12px;color:#2f8f35">1</div>
<div class="t" style="left:410px;top:25px;font-size:12px;color:#2f8f35">1</div>
<div class="t" style="left:511px;top:25px;font-size:12px;color:#2f8f35">1</div>
<div class="t" style="left:551px;top:25px;font-size:12px;color:#2f8f35">Ok</div>
<svg style="left:8px;top:44px" width="17" height="17"><circle cx="8.5" cy="8.5" r="7.8" fill="none" stroke="#555" stroke-width="1.1"/><path d="M5 8.8 L7.5 11.2 L12 6" fill="none" stroke="#555" stroke-width="1.1"/></svg>
<div class="t" style="left:44px;top:46px;font-size:12px;color:#2f8f35">14.021</div>
<div class="t" style="left:123px;top:46px;font-size:12px;color:#2f8f35">Table-Dining</div>
<div class="t" style="left:310px;top:46px;font-size:12px;color:#2f8f35">1</div>
<div class="t" style="left:410px;top:46px;font-size:12px;color:#2f8f35">1</div>
<div class="t" style="left:511px;top:46px;font-size:12px;color:#2f8f35">1</div>
<div class="t" style="left:551px;top:46px;font-size:12px;color:#2f8f35">Ok</div>
<svg style="left:8px;top:65px" width="17" height="16"><path d="M0.7 0.7 L16.3 15.3 M16.3 0.7 L0.7 15.3" stroke="#444" stroke-width="1.2"/></svg>
<div class="t" style="left:44px;top:67px;font-size:12px;color:#ee2e3a">14.023</div>
<div class="t" style="left:123px;top:67px;font-size:12px;color:#ee2e3a">107-01 Refrigerator</div>
<div class="t" style="left:310px;top:67px;font-size:12px;color:#ee2e3a">1</div>
<div class="t" style="left:410px;top:67px;font-size:12px;color:#ee2e3a">0</div>
<div class="t" style="left:511px;top:67px;font-size:12px;color:#ee2e3a">5</div>
<div class="t" style="left:551px;top:67px;font-size:12px;color:#ee2e3a">The Occurrences only exist in dRofus. The item is marked with &#x27;To be modelled&#x27;.</div>
<svg style="left:8px;top:87px" width="17" height="16"><path d="M8.5 0.8 L16.3 15.2 H0.7 Z" fill="none" stroke="#444" stroke-width="1.1"/><path d="M8.5 5.5 V10.5" stroke="#444" stroke-width="1.2"/><circle cx="8.5" cy="12.6" r="0.8" fill="#444"/></svg>
<div class="t" style="left:44px;top:88px;font-size:12px;color:#c9a24f">14.028</div>
<div class="t" style="left:123px;top:88px;font-size:12px;color:#c9a24f">M_Base Cabinet-Double Door...</div>
<div class="t" style="left:310px;top:88px;font-size:12px;color:#c9a24f">2</div>
<div class="t" style="left:410px;top:88px;font-size:12px;color:#c9a24f">1</div>
<div class="t" style="left:511px;top:88px;font-size:12px;color:#c9a24f">2</div>
<div class="t" style="left:551px;top:88px;font-size:12px;color:#c9a24f">The Occurrences exist in both dRofus and the model, but the count is different. The item is marked with &#x27;To be modelled&#x27;.</div>
<svg style="left:8px;top:107px" width="17" height="17"><circle cx="8.5" cy="8.5" r="7.8" fill="none" stroke="#555" stroke-width="1.1"/><path d="M5 8.8 L7.5 11.2 L12 6" fill="none" stroke="#555" stroke-width="1.1"/></svg>
<div class="t" style="left:44px;top:109px;font-size:12px;color:#2f8f35">14.030</div>
<div class="t" style="left:123px;top:109px;font-size:12px;color:#2f8f35">M_Counter Top w Sink Hole</div>
<div class="t" style="left:310px;top:109px;font-size:12px;color:#2f8f35">1</div>
<div class="t" style="left:410px;top:109px;font-size:12px;color:#2f8f35">1</div>
<div class="t" style="left:511px;top:109px;font-size:12px;color:#2f8f35">1</div>
<div class="t" style="left:551px;top:109px;font-size:12px;color:#2f8f35">Ok</div>
</div>
<div class="a" style="left:374px;top:1061px;width:1038px;height:16px;background:#f0f0f0"></div>
<div class="a" style="left:391px;top:1061px;width:930px;height:16px;background:#cdcdcd"></div>
<svg style="left:380px;top:1065px" width="6" height="9"><path d="M5 0.5 L1 4.5 L5 8.5" fill="none" stroke="#a0a0a0" stroke-width="1"/></svg>
<svg style="left:1400px;top:1065px" width="6" height="9"><path d="M1 0.5 L5 4.5 L1 8.5" fill="none" stroke="#a0a0a0" stroke-width="1"/></svg>
<div class="t" style="left:379px;top:1082px;font-size:9.8px;color:#222">6 of 6</div>
<div class="badge" style="left:1037px;top:695px">4</div>
<div class="a" style="left:1417px;top:145px;width:570px;height:439px;background:#f5f5f5;border:1px solid #a3a3a3"></div>
<div class="a" style="left:1418px;top:146px;width:568px;height:21px;background:#f0f0f0;border-bottom:1px solid #bdbdbd"></div>
<div class="t" style="left:1421px;top:150px;font-size:12px;color:#333">Properties</div>
<svg style="left:1952px;top:151px" width="8" height="11" viewBox="0 0 8 11"><path d="M2 0 H6 V6 L7.5 7.5 H0.5 L2 6 Z" fill="#222"/><path d="M4 7.5 V11" stroke="#555" stroke-width="1"/></svg>
<svg style="left:1970px;top:152px" width="9" height="9"><path d="M1 1 L8 8 M8 1 L1 8" stroke="#111" stroke-width="1.8"/></svg>
<div class="a" style="left:1417px;top:588px;width:570px;height:511px;background:#f5f5f5;border:1px solid #a3a3a3"></div>
<div class="a" style="left:1418px;top:589px;width:568px;height:21px;background:#f0f0f0;border-bottom:1px solid #bdbdbd"></div>
<div class="t" style="left:1421px;top:593px;font-size:12px;color:#333">Properties for IFC object</div>
<svg style="left:1952px;top:594px" width="8" height="11" viewBox="0 0 8 11"><path d="M2 0 H6 V6 L7.5 7.5 H0.5 L2 6 Z" fill="#222"/><path d="M4 7.5 V11" stroke="#555" stroke-width="1"/></svg>
<svg style="left:1970px;top:595px" width="9" height="9"><path d="M1 1 L8 8 M8 1 L1 8" stroke="#111" stroke-width="1.8"/></svg>
<svg style="left:1438px;top:177px" width="33" height="33" viewBox="0 0 33 32"><path d="M16.8 0.8 L32.3 8 V24.9 L16.8 31.3 L0.8 24.9 V8 Z" fill="#fff" stroke="#333" stroke-width="1.5"/><path d="M16.8 0.8 V18.2" stroke="#333" stroke-width="1.5"/><path d="M5.5 21.8 V9.7 L11.4 7.2 V19.4" fill="none" stroke="#333" stroke-width="1.5"/><path d="M19.8 6.7 L29.1 11.4 V19 L19.8 14.3 Z" fill="none" stroke="#333" stroke-width="1.5"/><path d="M1.2 25 L16.8 18.2 L32 25 L16.8 31.3 Z" fill="#e8502a"/></svg>
<div class="t" style="left:1485px;top:176px;font-size:16px;font-weight:bold;color:#111;line-height:18px">Room 07.011 Interaction Station</div>
<div class="t" style="left:1485px;top:196px;font-size:11.5px;font-style:italic;color:#333">07: AdultMedicine</div>
<div class="t" style="left:1485px;top:211px;font-size:11.5px;font-style:italic;color:#333">Updated: 19.04.2024 10:30:26 Åsmund Johansen</div>
<div class="a" style="left:1418px;top:226px;width:547px;height:321px;overflow:hidden">
<div class="grp" style="left:6px;top:9px;width:538px;height:247px"></div>
<div class="gh" style="left:11px;top:2px;font-size:12px">Name and Numbers</div>
<div class="lbl" style="left:16px;top:26px">Room Function #</div>
<div class="inp" style="left:154px;top:22px;width:380px;background:#f0f0f0"></div>
<div class="t" style="left:157px;top:26px;color:#222">07.011</div>
<div class="lbl" style="left:16px;top:51px">Room Name</div>
<div class="inp" style="left:154px;top:47px;width:380px;background:#fff"></div>
<div class="t" style="left:157px;top:51px;color:#222">Interaction Station</div>
<svg style="left:520px;top:56px" width="8" height="5"><path d="M0.5 0.5 L4 4 L7.5 0.5" fill="none" stroke="#444" stroke-width="1.1"/></svg>
<div class="lbl" style="left:16px;top:76px">Room Name Description</div>
<div class="inp" style="left:154px;top:72px;width:380px;background:#fff"></div>
<svg style="left:520px;top:81px" width="8" height="5"><path d="M0.5 0.5 L4 4 L7.5 0.5" fill="none" stroke="#444" stroke-width="1.1"/></svg>
<div class="lbl" style="left:16px;top:101px">Room Number</div>
<div class="inp" style="left:154px;top:97px;width:380px;background:#fff"></div>
<div class="lbl" style="left:16px;top:126px">User Room Number</div>
<div class="inp" style="left:154px;top:122px;width:380px;background:#fff"></div>
<div class="lbl" style="left:16px;top:151px">Additional Number:</div>
<div class="inp" style="left:154px;top:147px;width:380px;background:#fff"></div>
<div class="lbl" style="left:16px;top:176px">Name on Drawing</div>
<div class="inp" style="left:154px;top:172px;width:380px;background:#fff"></div>
<div class="lbl" style="left:16px;top:201px">Description</div>
<div class="inp" style="left:154px;top:197px;width:380px;background:#fff"></div>
<div class="lbl" style="left:16px;top:226px">Created by</div>
<div class="inp" style="left:154px;top:222px;width:380px;background:#fff"></div>
<div class="grp" style="left:6px;top:268px;width:538px;height:126px"></div>
<div class="gh" style="left:11px;top:260px;font-size:12px">Note</div>
<div class="a" style="left:19px;top:281px;width:515px;height:80px;background:#fffedf;border:1px solid #a9a9a9"></div>
<div class="t" style="left:22px;top:283px;color:#222">0ztdC3L1HAzhbhMHypqcA2</div>
</div>
<div class="a" style="left:1965px;top:226px;width:16px;height:321px;background:#ececec"></div>
<div class="a" style="left:1965px;top:243px;width:16px;height:128px;background:#cdcdcd"></div>
<svg style="left:1969px;top:231px" width="9" height="6"><path d="M0.5 5 L4.5 1 L8.5 5" fill="none" stroke="#a0a0a0" stroke-width="1"/></svg>
<svg style="left:1969px;top:537px" width="9" height="6"><path d="M0.5 1 L4.5 5 L8.5 1" fill="none" stroke="#a0a0a0" stroke-width="1"/></svg>
<div class="btn" style="left:1806px;top:553px;width:80px;height:20px">Undo</div>
<div class="btn" style="left:1896px;top:553px;width:80px;height:20px">Save</div>
<svg style="left:1437px;top:620px" width="34" height="34" viewBox="0 0 34 34"><rect x="5.2" y="3.999999999999999" width="12.4" height="12.4" rx="2.2" transform="rotate(45 11.4 10.2)" fill="none" stroke="#1d6c9e" stroke-width="3.4"/><rect x="16.0" y="3.999999999999999" width="12.4" height="12.4" rx="2.2" transform="rotate(45 22.2 10.2)" fill="none" stroke="#f0203f" stroke-width="3.4"/><rect x="5.2" y="15.2" width="12.4" height="12.4" rx="2.2" transform="rotate(45 11.4 21.4)" fill="none" stroke="#9a3c9f" stroke-width="3.4"/><rect x="16.0" y="15.2" width="12.4" height="12.4" rx="2.2" transform="rotate(45 22.2 21.4)" fill="none" stroke="#22a3d3" stroke-width="3.4"/></svg>
<div class="t" style="left:1485px;top:629px;font-size:15px;font-weight:bold;color:#111;line-height:18px">IfcSpace</div>
<div class="a" style="left:1418px;top:658px;width:547px;height:404px;overflow:hidden">
<div class="grp" style="left:6px;top:8px;width:538px;height:221px"></div>
<div class="gh" style="left:11px;top:2px;font-size:12px">Attributes</div>
<div class="lbl" style="left:16px;top:25px">GlobalId</div>
<div class="inp" style="left:262px;top:22px;width:272px;background:#f0f0f0"></div>
<div class="t" style="left:265px;top:25px;color:#222">0ztdC3L1HAzhbhMHypqcA2</div>
<div class="lbl" style="left:16px;top:50px">Name</div>
<div class="inp" style="left:262px;top:47px;width:272px;background:#fff"></div>
<div class="t" style="left:265px;top:50px;color:#222">1D13</div>
<div class="lbl" style="left:16px;top:75px">Description</div>
<div class="inp" style="left:262px;top:72px;width:272px;background:#fff"></div>
<div class="lbl" style="left:16px;top:100px">ObjectType</div>
<div class="inp" style="left:262px;top:97px;width:272px;background:#fff"></div>
<div class="lbl" style="left:16px;top:125px">LongName</div>
<div class="inp" style="left:262px;top:122px;width:272px;background:#fff"></div>
<div class="t" style="left:265px;top:125px;color:#222">Interaction Station</div>
<div class="lbl" style="left:16px;top:150px">CompositionType</div>
<div class="inp" style="left:262px;top:147px;width:272px;background:#fff"></div>
<div class="t" style="left:265px;top:150px;color:#222">ELEMENT</div>
<div class="lbl" style="left:16px;top:175px">PredefinedType</div>
<div class="inp" style="left:262px;top:172px;width:272px;background:#fff"></div>
<div class="t" style="left:265px;top:175px;color:#222">SPACE</div>
<div class="lbl" style="left:16px;top:200px">ElevationWithFlooring</div>
<div class="inp" style="left:262px;top:197px;width:60px;background:#fff"></div>
<div class="t" style="left:262px;top:200px;width:56px;text-align:right;color:#222">0,00</div>
<div class="grp" style="left:6px;top:242px;width:538px;height:71px"></div>
<div class="gh" style="left:11px;top:234px;font-size:11.6px">Pset_SpaceCommon</div>
<div class="lbl" style="left:16px;top:258px">IsExternal</div>
<div class="inp" style="left:262px;top:255px;width:272px;background:#fff"></div>
<div class="t" style="left:265px;top:258px;color:#222">False</div>
<div class="lbl" style="left:16px;top:283px">Reference</div>
<div class="inp" style="left:262px;top:280px;width:272px;background:#fff"></div>
<div class="t" style="left:265px;top:283px;color:#222">Interaction Station 1D13</div>
<div class="grp" style="left:6px;top:326px;width:538px;height:45px"></div>
<div class="gh" style="left:11px;top:317px;font-size:11.6px">Pset_SpaceHeaterTypeCommon</div>
<div class="lbl" style="left:16px;top:341px">Reference</div>
<div class="inp" style="left:262px;top:338px;width:272px;background:#fff"></div>
<div class="t" style="left:265px;top:341px;color:#222">Interaction Station 1D13</div>
<div class="grp" style="left:6px;top:383px;width:538px;height:69px"></div>
<div class="gh" style="left:11px;top:375px;font-size:11.6px">Qto_SpaceBaseQuantities</div>
<div class="lbl" style="left:16px;top:399px">Height</div>
<div class="inp" style="left:262px;top:396px;width:60px;background:#fff"></div>
<div class="t" style="left:262px;top:399px;width:56px;text-align:right;color:#222">2,80</div>
</div>
<div class="a" style="left:1965px;top:658px;width:16px;height:404px;background:#ececec"></div>
<div class="a" style="left:1965px;top:674px;width:16px;height:63px;background:#cdcdcd"></div>
<svg style="left:1969px;top:663px" width="9" height="6"><path d="M0.5 5 L4.5 1 L8.5 5" fill="none" stroke="#a0a0a0" stroke-width="1"/></svg>
<svg style="left:1969px;top:1052px" width="9" height="6"><path d="M0.5 1 L4.5 5 L8.5 1" fill="none" stroke="#a0a0a0" stroke-width="1"/></svg>
<div class="btn" style="left:1806px;top:1068px;width:80px;height:20px">Undo</div>
<div class="btn" style="left:1896px;top:1068px;width:80px;height:20px">Save</div>
<div class="badge" style="left:1596px;top:643px">5</div>
<div class="a" style="left:1992px;top:140px;width:1px;height:964px;background:#a7a7a7"></div>
<svg style="left:2001px;top:146px" width="24" height="18"><rect x="0.7" y="0.7" width="22.6" height="16.6" rx="1.5" fill="#fff" stroke="#777" stroke-width="1.3"/><path d="M0.7 5.5 H23.3 M7.5 5.5 V17.3 M7.5 11 H23.3" stroke="#777" stroke-width="1.2"/></svg>
<svg style="left:2038px;top:154px" width="6" height="4"><path d="M0 0H6L3 3.5Z" fill="#222"/></svg>
<div class="a" style="left:1993px;top:173px;width:53px;height:34px;background:#d8dada"></div>
<div class="a" style="left:2044px;top:173px;width:2px;height:34px;background:#e8502a"></div>
<div class="a" style="left:1993px;top:241px;width:53px;height:34px;background:#d8dada"></div>
<div class="a" style="left:2044px;top:241px;width:2px;height:34px;background:#e8502a"></div>
<div class="a" style="left:1993px;top:440px;width:53px;height:33px;background:#d8dada"></div>
<div class="a" style="left:2044px;top:440px;width:2px;height:33px;background:#e8502a"></div>
<div class="a" style="left:1993px;top:474px;width:53px;height:34px;background:#d8dada"></div>
<div class="a" style="left:2044px;top:474px;width:2px;height:34px;background:#e8502a"></div>
<svg style="left:2006px;top:177px" width="26" height="26" viewBox="0 0 26 26"><circle cx="13" cy="13" r="12" fill="none" stroke="#222" stroke-width="1.3"/><circle cx="13" cy="6.8" r="1.6" fill="#111"/><path d="M10.5 10.5 H14 V19 H15.8 V20.5 H10.2 V19 H12 V12 H10.5 Z" fill="#111"/></svg>
<svg style="left:2006px;top:444px" width="26" height="26" viewBox="0 0 26 26"><circle cx="13" cy="13" r="12" fill="none" stroke="#222" stroke-width="1.3"/><circle cx="13" cy="6.8" r="1.6" fill="#111"/><path d="M10.5 10.5 H14 V19 H15.8 V20.5 H10.2 V19 H12 V12 H10.5 Z" fill="#111"/></svg>
<svg style="left:2008px;top:210px" width="24" height="26" viewBox="0 0 24 26"><path d="M12 1 L23 7 V19 L12 25 L1 19 V7 Z" fill="#fff" stroke="#333" stroke-width="1.2"/><path d="M8 6.5 H14 L16.5 9 V19.5 H8 Z" fill="#fff" stroke="#333" stroke-width="1"/><path d="M10 11 H14.5 M10 13.5 H14.5 M10 16 H14.5" stroke="#333" stroke-width="0.9"/></svg>
<svg style="left:2008px;top:245px" width="24" height="26" viewBox="0 0 24 26"><path d="M12 1 L23 7 V19 L12 25 L1 19 V7 Z" fill="#fff" stroke="#333" stroke-width="1.2"/><path d="M1 7 L12 13 L23 7 M12 13 V25" fill="none" stroke="#333" stroke-width="0.8"/><path d="M12 8 L16.5 10.5 V15.5 L12 18 L7.5 15.5 V10.5 Z M7.5 10.5 L12 13 L16.5 10.5 M12 13 V18" fill="none" stroke="#333" stroke-width="1"/></svg>
<svg style="left:2008px;top:279px" width="25" height="21" viewBox="0 0 25 21"><path d="M1 5 H7 L9 2 H16 L18 5 H24 V20 H1 Z" fill="#fff" stroke="#333" stroke-width="1.2"/><circle cx="14" cy="12.5" r="5" fill="none" stroke="#333" stroke-width="1.2"/><circle cx="14" cy="12.5" r="2.8" fill="none" stroke="#333" stroke-width="1"/><circle cx="5" cy="8.5" r="1" fill="#333"/></svg>
<svg style="left:2009px;top:313px" width="20" height="26" viewBox="0 0 20 26"><path d="M1 1 H13 L19 7 V25 H1 Z" fill="#fff" stroke="#333" stroke-width="1.2"/><path d="M4.5 12 V4 Q4.5 1 7 1 Q9.5 1 9.5 4 V13 Q9.5 15.5 7.5 15.5 Q5.8 15.5 5.8 13 V5" fill="none" stroke="#333" stroke-width="1"/></svg>
<svg style="left:2009px;top:348px" width="20" height="26" viewBox="0 0 20 26"><path d="M1 1 H13 L19 7 V25 H1 Z" fill="#fff" stroke="#333" stroke-width="1.2"/><path d="M13 1 V7 H19" fill="none" stroke="#333" stroke-width="1"/><circle cx="9.5" cy="15.5" r="5" fill="none" stroke="#333" stroke-width="1.1"/><path d="M9.5 12.5 V15.8 H12" fill="none" stroke="#333" stroke-width="1"/></svg>
<svg style="left:2007px;top:381px" width="26" height="22" viewBox="0 0 26 22"><path d="M3 21 V1 M1 3 L3 0.5 L5 3" fill="none" stroke="#333" stroke-width="1"/><path d="M3 20 H25 M22.5 18 L25 20 L22.5 22" fill="none" stroke="#333" stroke-width="1"/><rect x="4" y="9" width="15" height="10" fill="#8a8a8a"/></svg>
<div class="t" style="left:2011px;top:423px;font-size:11.5px;font-weight:bold;color:#111">IFC</div>
<svg style="left:2006px;top:478px" width="25" height="26" viewBox="0 0 25 26"><path d="M12.5 1 L24 6.5 V19.5 L12.5 25 L1 19.5 V6.5 Z" fill="#9c9c9c" stroke="#555" stroke-width="1.1" stroke-linejoin="round"/><path d="M1.5 6.8 L12.5 12 L23.5 6.8 M12.5 12 V24.5" fill="none" stroke="#f4f4f4" stroke-width="1.2"/><text x="5" y="17" font-family="Liberation Sans" font-size="10" fill="#2a2a2a">1:1</text></svg>
</body></html>
